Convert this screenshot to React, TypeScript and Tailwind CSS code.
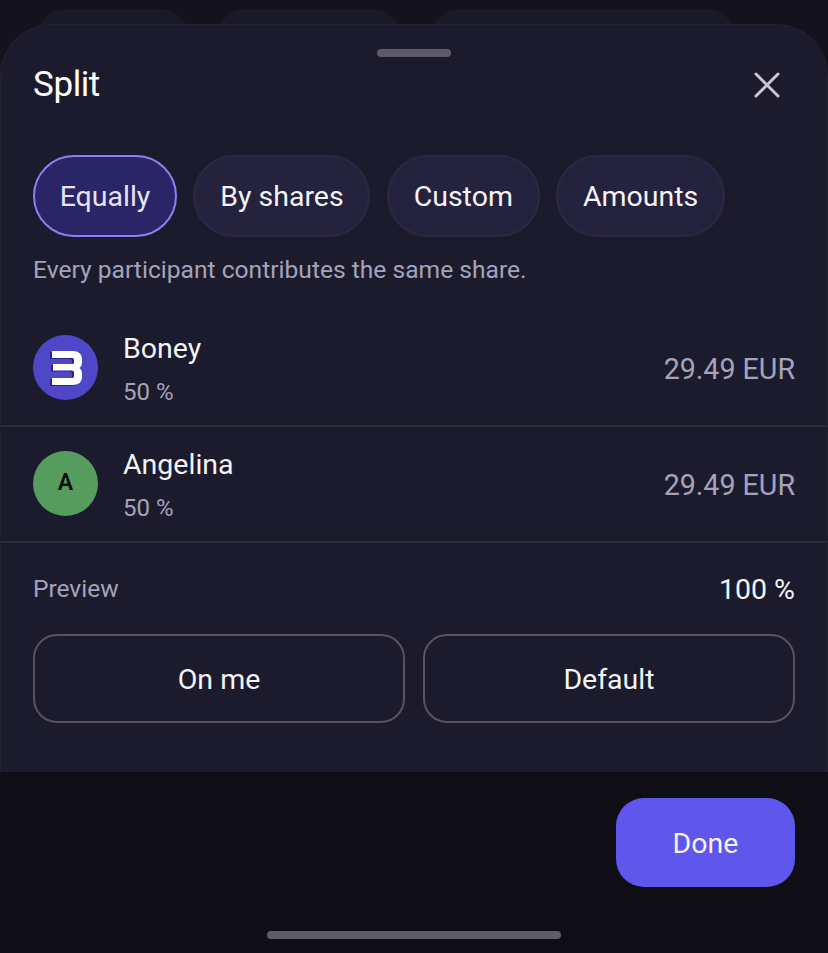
import React from "react";

const chips = [
  { label: "Equally", w: "w-[144px]", active: true },
  { label: "By shares", w: "w-[177px]", active: false },
  { label: "Custom", w: "w-[153px]", active: false },
  { label: "Amounts", w: "w-[169px]", active: false },
];

const logo =
  "M0 0H21C26.500 0 30 3 30 8V11C30 14 29 16 27.500 17C29 18 30 20 30 23V26C30 31 26.500 34 21 34H0V27H20C21.500 27 22 26.200 22 25V22C22 20.500 21.500 19.500 20 19.500H1V13H20C21.500 13 22 12.500 22 11V9C22 7.800 21.500 7 20 7H0Z";

function BoneyLogo() {
  return (
    <svg width="33" height="36" viewBox="-3 -1 33 36" fill="none">
      <path d={logo} fill="#2a1f96" transform="translate(-2 1)" />
      <path d={logo} fill="#ffffff" />
    </svg>
  );
}

function Row({ name, avatar }: { name: string; avatar: React.ReactNode }) {
  return (
    <div className="flex h-[116px] items-center justify-between border-b-2 border-[#2b2a3a] px-[32px]">
      <div className="flex items-center gap-[25px]">
        {avatar}
        <div className="flex flex-col pt-[3px]">
          <span className="text-[28.500px] leading-[36px] text-[#f4f3f8]">{name}</span>
          <span className="mt-[9px] text-[24px] leading-[32px] text-[#a5a3bb]">50 %</span>
        </div>
      </div>
      <span className="pt-[3px] text-[28.600px] leading-[36px] text-[#a5a3bb]">29.49 EUR</span>
    </div>
  );
}

export default function App() {
  return (
    <div className="flex h-[953px] w-[828px] flex-col overflow-hidden bg-[#0f0e17] font-['Roboto',sans-serif]">
      <div className="flex h-[24px] shrink-0 overflow-hidden bg-[#13121d] pt-[9px]">
        <div className="ml-[36px] h-[60px] w-[154px] rounded-t-[30px] bg-[#1a1928]" />
        <div className="ml-[26px] h-[60px] w-[186px] rounded-t-[30px] bg-[#1a1928]" />
        <div className="ml-[28px] h-[60px] w-[306px] rounded-t-[30px] bg-[#1a1928]" />
      </div>
      <div className="flex h-[748px] shrink-0 flex-col bg-[#13121d]">
        <div className="flex h-full flex-col rounded-t-[52px] border-x border-t border-[#232232] bg-[#1c1b2d]">
          <div className="flex justify-center pt-[24px]">
            <div className="h-[8px] w-[74px] rounded-full bg-[#5c5b66]" />
          </div>
          <div className="mt-[4px] flex items-center justify-between pl-[32px] pr-[47px]">
            <span className="text-[35px] leading-[48px] tracking-[-0.4px] text-white">Split</span>
            <svg width="26" height="26" viewBox="0 0 26 26" fill="none" stroke="#c9c7d6" strokeWidth="3" strokeLinecap="round">
              <path d="M2 2L24 24M24 2L2 24" />
            </svg>
          </div>
          <div className="mt-[46px] flex gap-[16.400px] pl-[32px]">
            {chips.map((c) => (
              <div
                key={c.label}
                className={`flex h-[82px] items-center justify-center rounded-full pt-[3px] text-[28.500px] ${c.w} ${
                  c.active
                    ? "border-2 border-[#8b80f0] bg-[#2a2566] text-[#e6e4f7]"
                    : "border-2 border-[#2b2942] bg-[#25223e] text-[#f4f3f8]"
                }`}
              >
                {c.label}
              </div>
            ))}
          </div>
          <p className="ml-[32px] mt-[17px] text-[24.600px] leading-[32px] text-[#a5a3bb]">
            Every participant contributes the same share.
          </p>
          <div className="mt-[24.500px] flex flex-col">
            <Row
              name="Boney"
              avatar={
                <div className="flex h-[65px] w-[65px] items-center justify-center rounded-full bg-[#4f46c8]">
                  <BoneyLogo />
                </div>
              }
            />
            <Row
              name="Angelina"
              avatar={
                <div className="flex h-[65px] w-[65px] items-center justify-center rounded-full bg-[#559c5e] text-[23px] font-semibold text-[#0b0f0b]">
                  A
                </div>
              }
            />
          </div>
          <div className="mt-[28px] flex items-center justify-between px-[32px]">
            <span className="text-[24.500px] leading-[32px] text-[#a5a3bb]">Preview</span>
            <span className="pt-[1px] text-[28.500px] leading-[36px] text-[#f4f3f8]">100 %</span>
          </div>
          <div className="mt-[26.500px] flex gap-[18px] px-[32px]">
            <div className="flex h-[89px] flex-1 items-center justify-center rounded-[24px] border-2 border-[#55545f] pt-[3px] text-[28.500px] text-[#f4f3f8]">
              On me
            </div>
            <div className="flex h-[89px] flex-1 items-center justify-center rounded-[24px] border-2 border-[#55545f] pt-[3px] text-[28.500px] text-[#f4f3f8]">
              Default
            </div>
          </div>
        </div>
      </div>
      <div className="flex flex-1 flex-col">
        <div className="mt-[26px] flex justify-end pr-[33px]">
          <div className="flex h-[89px] w-[179px] items-center justify-center rounded-[28px] bg-[#5f57eb] pt-[3px] text-[28.500px] text-[#f4f3f8]">
            Done
          </div>
        </div>
        <div className="mt-[44px] flex justify-center">
          <div className="h-[8px] w-[294px] rounded-full bg-[#5f5e68]" />
        </div>
      </div>
    </div>
  );
}
